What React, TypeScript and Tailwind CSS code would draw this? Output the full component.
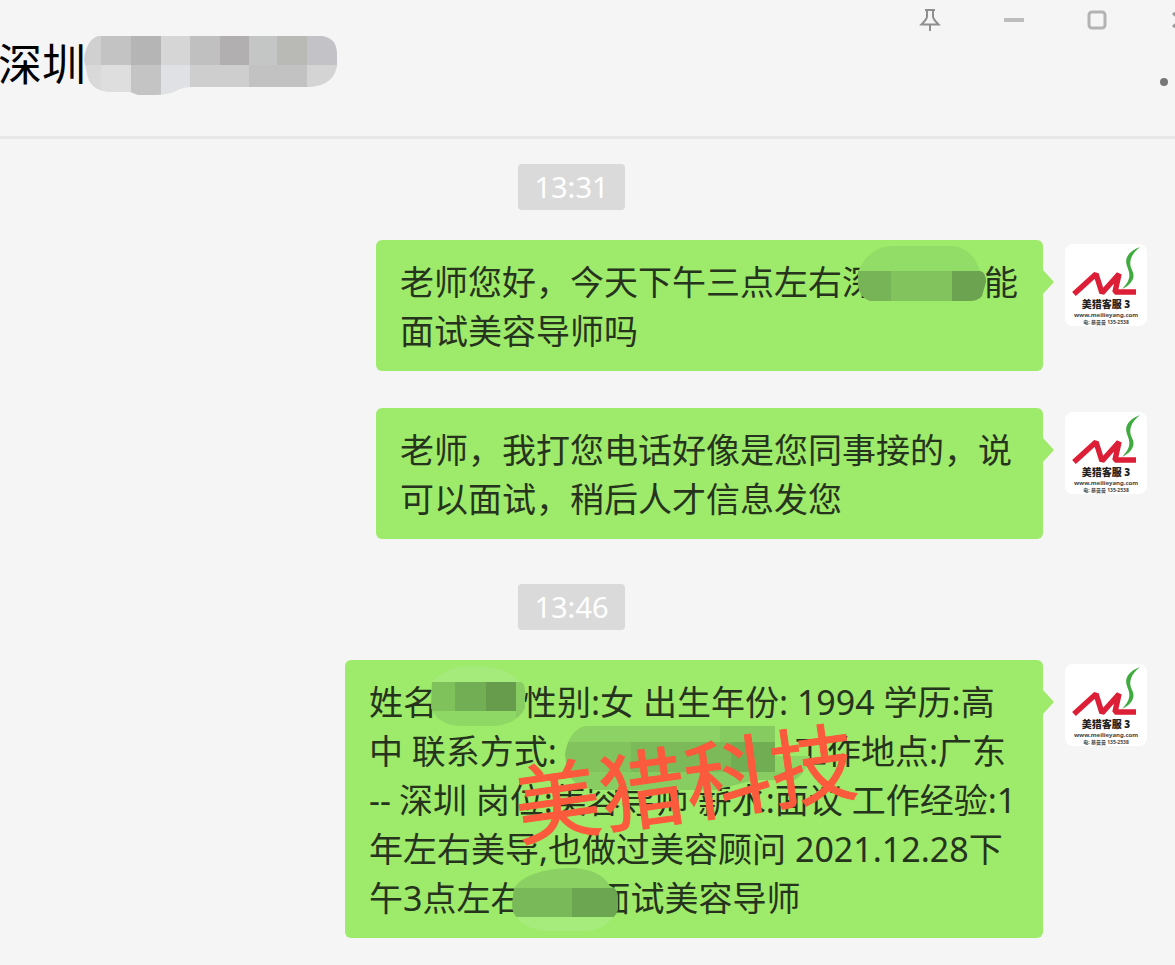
import React from 'react';

interface Tile {
  x: number;
  y: number;
  w: number;
  h: number;
  fill: string;
}

interface MosaicProps {
  id: string;
  width: number;
  height: number;
  outline: string;
  tiles: Tile[];
  className: string;
}

// Pixelated patch that hides part of a line
function Mosaic({ id, width, height, outline, tiles, className }: MosaicProps) {
  return (
    <svg
      width={width}
      height={height}
      viewBox={`0 0 ${width} ${height}`}
      className={`absolute max-w-none ${className}`}
      aria-hidden="true"
    >
      <clipPath id={id}>
        <path d={outline} />
      </clipPath>
      <g clipPath={`url(#${id})`} shapeRendering="crispEdges">
        {tiles.map((t, i) => (
          <rect key={i} x={t.x} y={t.y} width={t.w} height={t.h} fill={t.fill} />
        ))}
      </g>
    </svg>
  );
}

const TITLE_TILES: Tile[] = [
  { x: 0, y: 0, w: 17, h: 29, fill: '#d0d0d0' },
  { x: 17, y: 0, w: 30, h: 29, fill: '#c3c3c3' },
  { x: 47, y: 0, w: 30, h: 29, fill: '#b5b5b5' },
  { x: 77, y: 0, w: 29, h: 29, fill: '#d6d6d7' },
  { x: 106, y: 0, w: 30, h: 29, fill: '#c0c0c0' },
  { x: 136, y: 0, w: 29, h: 29, fill: '#b2afb0' },
  { x: 165, y: 0, w: 28, h: 29, fill: '#c4c6c6' },
  { x: 193, y: 0, w: 30, h: 29, fill: '#b9b9b6' },
  { x: 223, y: 0, w: 30, h: 29, fill: '#c3c3c7' },
  { x: 0, y: 29, w: 17, h: 30, fill: '#d9d9d9' },
  { x: 17, y: 29, w: 30, h: 30, fill: '#dedede' },
  { x: 47, y: 29, w: 30, h: 30, fill: '#c4c4c4' },
  { x: 77, y: 29, w: 29, h: 30, fill: '#dfe1e4' },
  { x: 106, y: 29, w: 59, h: 30, fill: '#cecece' },
  { x: 165, y: 29, w: 58, h: 30, fill: '#c2c2c2' },
  { x: 223, y: 29, w: 30, h: 30, fill: '#d4d4d4' },
];

const PLACE_TILES: Tile[] = [
  { x: 0, y: 0, w: 130, h: 25, fill: '#92dd67' },
  { x: 0, y: 25, w: 35, h: 30, fill: '#77b458' },
  { x: 35, y: 25, w: 61, h: 30, fill: '#83c35d' },
  { x: 96, y: 25, w: 34, h: 30, fill: '#6ba350' },
];

const NAME_TILES: Tile[] = [
  { x: 0, y: 0, w: 96, h: 16, fill: '#a5eb7c' },
  { x: 0, y: 16, w: 26, h: 29, fill: '#7fc15b' },
  { x: 26, y: 16, w: 31, h: 29, fill: '#72ae54' },
  { x: 57, y: 16, w: 30, h: 29, fill: '#679c4c' },
  { x: 87, y: 16, w: 9, h: 44, fill: '#88cd61' },
  { x: 0, y: 45, w: 87, h: 15, fill: '#8ed866' },
];

const PHONE_TILES: Tile[] = [
  { x: 0, y: 0, w: 155, h: 16, fill: '#8dd265' },
  { x: 155, y: 0, w: 90, h: 16, fill: '#86cb60' },
  { x: 0, y: 16, w: 66, h: 30, fill: '#82c35d' },
  { x: 66, y: 16, w: 100, h: 30, fill: '#7bb959' },
  { x: 166, y: 16, w: 44, h: 30, fill: '#71ad53' },
  { x: 210, y: 16, w: 35, h: 14, fill: '#9de56e' },
  { x: 210, y: 30, w: 35, h: 16, fill: '#8ed765' },
  { x: 0, y: 46, w: 245, h: 18, fill: '#88cd61' },
];

const CITY_TILES: Tile[] = [
  { x: 0, y: 0, w: 106, h: 20, fill: '#8ad062' },
  { x: 0, y: 20, w: 60, h: 29, fill: '#7ab959' },
  { x: 60, y: 20, w: 46, h: 29, fill: '#6ca651' },
  { x: 0, y: 49, w: 106, h: 16, fill: '#a5ec7d' },
];

function TitleBar() {
  return (
    <header className="border-b-3 border-[#e7e7e7]">
      <div className="flex h-10 items-center justify-end gap-[62px] overflow-hidden">
        <button aria-label="Pin" className="shrink-0 text-[#8f8f8f]">
          <svg width="22" height="24" viewBox="0 0 22 24" fill="none" stroke="currentColor" strokeWidth="2">
            <path d="M6 2h10M8 2v6.500C8 11 6.500 12.500 2.500 16.500h17C15.500 12.500 14 11 14 8.500V2M11 16v7" />
          </svg>
        </button>
        <button aria-label="Minimize" className="shrink-0 text-[#bdbdbd]">
          <svg width="22" height="22" viewBox="0 0 22 22" fill="none" stroke="currentColor" strokeWidth="4">
            <path d="M1 11h20" />
          </svg>
        </button>
        <button aria-label="Maximize" className="shrink-0 text-[#b3b3b3]">
          <svg width="20" height="20" viewBox="0 0 20 20" fill="none" stroke="currentColor" strokeWidth="3">
            <rect x="2" y="2" width="16" height="16" rx="3" />
          </svg>
        </button>
        <button aria-label="Close" className="-mr-4 shrink-0 text-[#9b9b9b]">
          <svg width="22" height="18" viewBox="-2 0 22 18" fill="none" stroke="currentColor" strokeWidth="3">
            <path d="M2 2l16 14M18 2L2 16" />
          </svg>
        </button>
      </div>
      <div className="flex h-24 items-start justify-between">
        <h1 className="relative text-[44px] leading-[48px] text-black">
          <span className="-ml-0.5">深圳</span>
          <Mosaic
            id="title-mosaic"
            width={253}
            height={59}
            outline="M14 0H238Q253 2 253 18V30Q250 49 226 51H110Q98 51 92 55Q84 59 70 59H54L46 56H24Q8 54 4 42L0 24Q2 4 14 0Z"
            tiles={TITLE_TILES}
            className="-top-1 left-[84px]"
          />
        </h1>
        <button aria-label="More" className="mt-[38px] mr-[7px]">
          <span className="block size-2 rounded-full bg-[#777]" />
        </button>
      </div>
    </header>
  );
}

function TimeStamp({ time }: { time: string }) {
  return (
    <time className="mr-8 block h-[46px] w-[107px] self-center rounded bg-[#dadada] text-center text-[29px] leading-[46px] text-white">
      {time}
    </time>
  );
}

function Avatar() {
  return (
    <svg
      viewBox="0 0 82 82"
      className="mt-1 mr-7 size-[82px] shrink-0 rounded-lg bg-white"
      role="img"
      aria-label="美猎客服3"
    >
      <path d="M9 50L31 30L37 49L54 30L50 48H71" fill="none" stroke="#dc1f36" strokeWidth="5.500" strokeLinejoin="bevel" />
      <path
        d="M75 3C64 7 59 14 62 22C64 28 68 34 57 45C67 40 71 33 67 26C63 18 66 10 75 3Z"
        fill="#3faa3d"
      />
      <text x="41" y="64" textAnchor="middle" fontSize="10" fontWeight="900" fill="#222">
        美猎客服 3
      </text>
      <text x="41" y="73" textAnchor="middle" fontSize="6" fontWeight="700" fill="#444">
        www.meilieyang.com
      </text>
      <text x="41" y="80" textAnchor="middle" fontSize="5" fontWeight="700" fill="#444">
        电: 蔡曼曼 135-2538
      </text>
    </svg>
  );
}

interface MessageProps {
  width: string;
  children: React.ReactNode;
}

function Message({ width, children }: MessageProps) {
  return (
    <li className="flex items-start justify-end gap-[22px]">
      <div
        className={`relative rounded-md bg-[#9eea6a] pt-[18px] pb-[15px] pl-6 text-[34px] leading-[49px] whitespace-nowrap text-[#26331d] ${width}`}
      >
        {children}
        <svg width="11" height="24" viewBox="0 0 11 24" className="absolute top-[30px] left-full" aria-hidden="true">
          <path d="M0 0L11 12L0 24Z" fill="#9eea6a" />
        </svg>
      </div>
      <Avatar />
    </li>
  );
}

function App() {
  return (
    <main className="min-h-screen overflow-hidden bg-[#f5f5f5] font-['Noto_Sans','Noto_Sans_CJK_SC',sans-serif]">
      <TitleBar />
      <ul className="flex flex-col gap-[37px] pt-[25px]">
        <li className="-mb-[7px] flex flex-col">
          <TimeStamp time="13:31" />
        </li>
        <Message width="w-[667px]">
          <p>
            老师您好，今天下午三点左右深
            <span className="relative inline-block w-[108px] align-top">
              <Mosaic
                id="place-mosaic"
                width={130}
                height={55}
                outline="M2 26Q12 2 34 0H98Q118 4 124 25Q130 26 130 36L126 50Q122 55 114 55H14Q4 52 2 40Z"
                tiles={PLACE_TILES}
                className="-top-3 -left-5"
              />
            </span>
            能
          </p>
          <p>面试美容导师吗</p>
        </Message>
        <Message width="w-[667px]">
          <p>老师，我打您电话好像是您同事接的，说</p>
          <p>可以面试，稍后人才信息发您</p>
        </Message>
        <li className="mt-2 -mb-[7px] flex flex-col">
          <TimeStamp time="13:46" />
        </li>
        <Message width="w-[698px]">
          <p>
            姓名
            <span className="relative inline-block w-[86px] align-top">
              <Mosaic
                id="name-mosaic"
                width={96}
                height={60}
                outline="M3 16Q16 0 44 0Q78 0 88 14Q96 16 96 24V42Q88 58 66 60H30Q8 58 2 42Z"
                tiles={NAME_TILES}
                className="-top-3 -left-2"
              />
            </span>
            性别:女 出生年份: 1994 学历:高
          </p>
          <p>
            中 联系方式:
            <span className="relative inline-block w-[236px] align-top">
              <Mosaic
                id="phone-mosaic"
                width={245}
                height={64}
                outline="M20 0H210V30H245Q242 46 230 54H190L150 64H30Q6 60 2 44L0 28Q4 4 20 0Z"
                tiles={PHONE_TILES}
                className="-top-px left-2"
              />
            </span>
            工作地点:广东
          </p>
          <p>
            <span className="mr-2">--</span>深圳 岗位:美容导师 薪水:面议 工作经验:1
          </p>
          <p>年左右美导,也做过美容顾问 2021.12.28下</p>
          <p>
            午3点左右
            <span className="relative inline-block w-[72px] align-top">
              <Mosaic
                id="city-mosaic"
                width={106}
                height={63}
                outline="M2 20Q14 2 56 0Q88 0 98 18Q106 20 106 30V42Q104 48 98 52Q92 62 72 63H32Q12 60 6 50Q0 46 0 36Z"
                tiles={CITY_TILES}
                className="-top-1.5 -left-3"
              />
            </span>
            面试美容导师
          </p>
          <span className="absolute top-[63px] left-[168px] -rotate-8 text-[86px] leading-[120px] text-[#fb5a3c] [-webkit-text-stroke:1px_#fb5a3c]">
            美猎科技
          </span>
        </Message>
      </ul>
    </main>
  );
}

export default App;
